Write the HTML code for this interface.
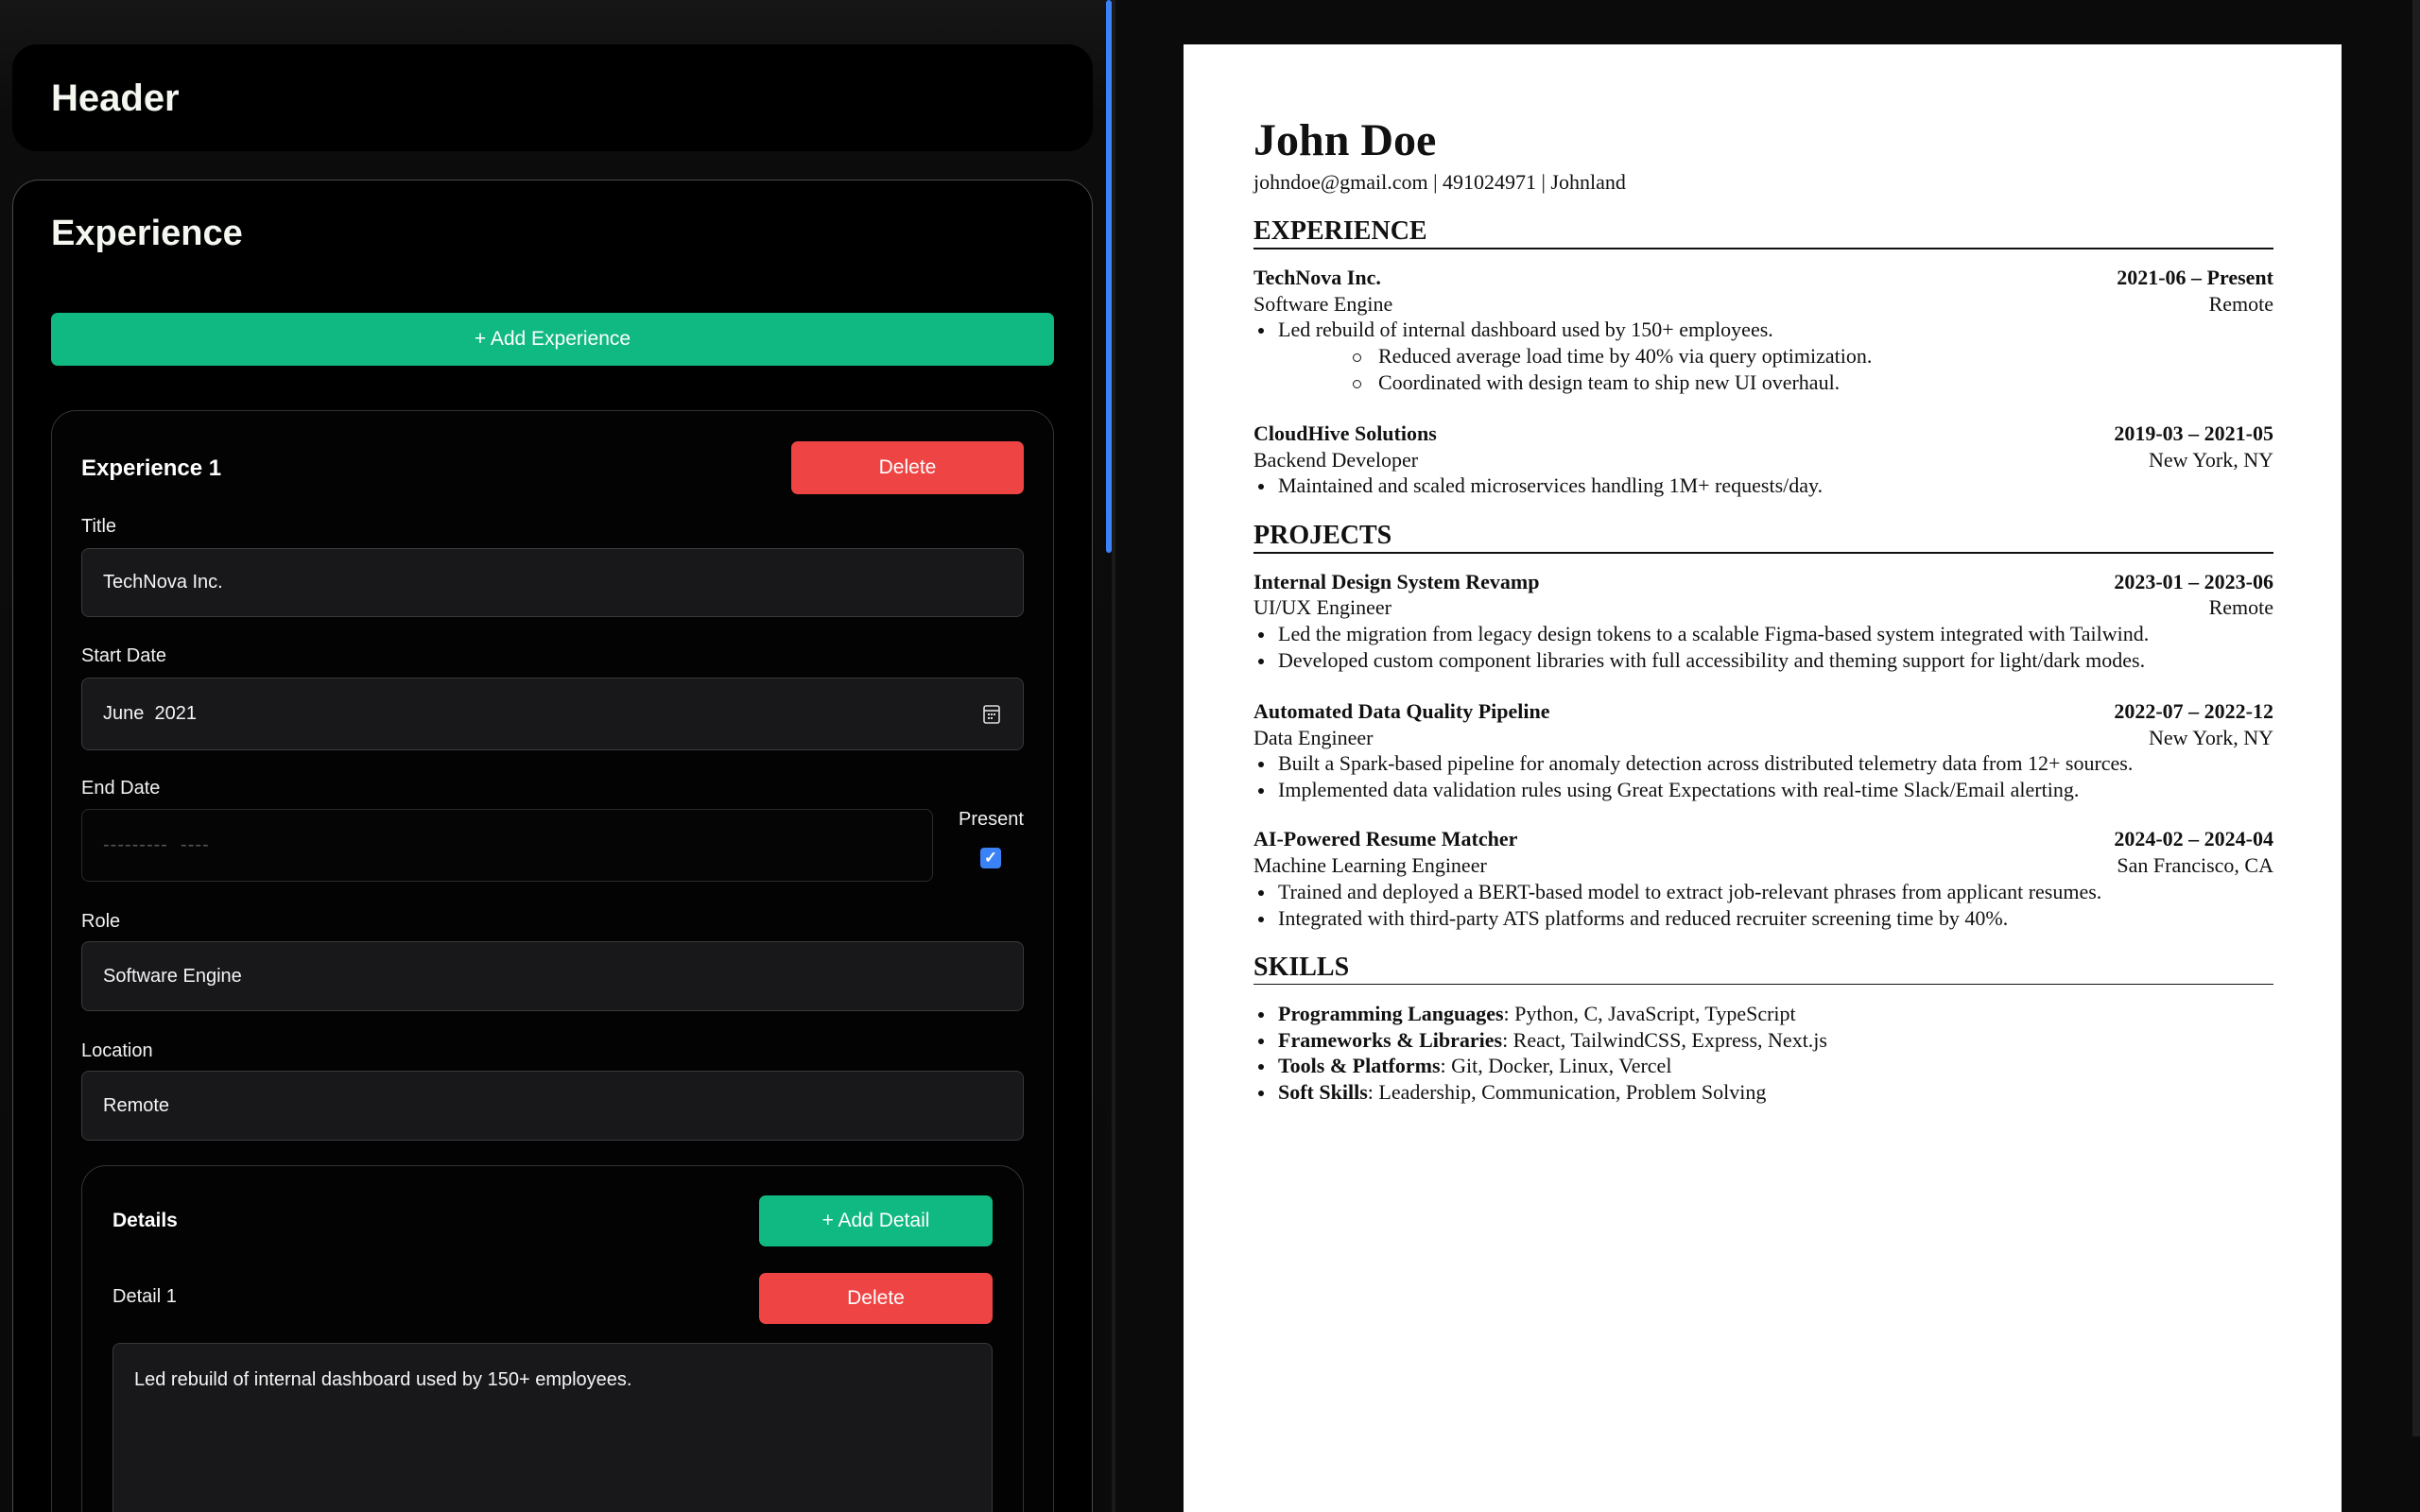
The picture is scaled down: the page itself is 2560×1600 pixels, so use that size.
<!DOCTYPE html>
<html><head><meta charset="utf-8">
<style>
*{box-sizing:border-box;margin:0;padding:0}
html,body{width:2560px;height:1600px;overflow:hidden}
body{background:#0b0b0b;font-family:"Liberation Sans",sans-serif}
#wrap{position:relative;width:2560px;height:1600px;overflow:hidden}
.a{position:absolute}
#left{position:absolute;left:0;top:0;width:1170px;height:1600px;overflow:hidden;background:linear-gradient(#161616,#0c0c0c 120px,#0a0a0a)}
.card{position:absolute;background:#000;border-radius:26px}
.open{border-bottom:none !important;border-bottom-left-radius:0 !important;border-bottom-right-radius:0 !important}
.lbl{position:absolute;color:#f1f1f1;font-size:20px;line-height:24px}
.inp{position:absolute;left:86px;width:997px;background:#18181b;border:1px solid #3a3a3e;border-radius:8px;color:#f4f4f4;font-size:20px;padding-left:22px;display:flex;align-items:center}
.btn{position:absolute;border-radius:7px;color:#fff;font-size:21px;display:flex;align-items:center;justify-content:center}
.g{background:#10b981}.r{background:#ef4444}
#page{position:absolute;left:1252px;top:47px;width:1225px;height:1553px;background:#fff}
.l{position:absolute;left:1326px;width:1079px;height:28px;line-height:28px;font-family:"Liberation Serif",serif;font-size:22px;color:#111;display:flex;justify-content:space-between;white-space:nowrap}
.b{font-weight:bold}
.h{font-size:28px;font-weight:bold;height:34px;line-height:34px}
.rule{position:absolute;left:1326px;width:1079px;height:2px;background:#111}
.bl::before{content:"";position:absolute;left:5px;top:12px;width:6px;height:6px;border-radius:50%;background:#111}
.bl{padding-left:26px;justify-content:flex-start}
.sb{padding-left:132px;justify-content:flex-start}
.sb::before{content:"";position:absolute;left:105px;top:11px;width:7px;height:7px;border-radius:50%;border:1px solid #111}
</style></head><body><div id="wrap">
<div id="left">
  <div class="card" style="left:13px;top:47px;width:1143px;height:113px;background:#000"></div>
  <div class="a" style="left:54px;top:82px;color:#f3f7f0;font-size:40px;font-weight:bold">Header</div>

  <div class="card open" style="left:13px;top:190px;width:1143px;height:1410px;border:1px solid #4a4a4a;border-radius:28px"></div>
  <div class="a" style="left:54px;top:226px;color:#f3f7f0;font-size:38px;font-weight:bold">Experience</div>
  <div class="btn g" style="left:54px;top:331px;width:1061px;height:56px">+ Add Experience</div>

  <div class="card open" style="left:54px;top:434px;width:1061px;height:1166px;border:1px solid #333;border-radius:26px;background:#030303"></div>
  <div class="a" style="left:86px;top:482px;color:#fff;font-size:24px;font-weight:bold">Experience 1</div>
  <div class="btn r" style="left:837px;top:467px;width:246px;height:56px">Delete</div>

  <div class="lbl" style="left:86px;top:545px">Title</div>
  <div class="inp" style="top:580px;height:73px">TechNova Inc.</div>
  <div class="lbl" style="left:86px;top:682px">Start Date</div>
  <div class="inp" style="top:717px;height:77px">June&nbsp; 2021
    <svg class="a" style="left:952px;top:27px" width="20" height="22" viewBox="0 0 20 22"><rect x="2" y="2" width="16" height="18" rx="2" fill="none" stroke="#ddd" stroke-width="1.6"/><line x1="2" y1="7" x2="18" y2="7" stroke="#ddd" stroke-width="1.6"/><g fill="#ddd"><rect x="6" y="10" width="2" height="2"/><rect x="9" y="10" width="2" height="2"/><rect x="12" y="10" width="2" height="2"/><rect x="6" y="14" width="2" height="2"/><rect x="9" y="14" width="2" height="2"/></g></svg>
  </div>
  <div class="lbl" style="left:86px;top:822px">End Date</div>
  <div class="inp" style="top:856px;height:77px;width:901px;background:#050505;border-color:#2a2a2a;color:#555;letter-spacing:1px">---------&nbsp; ----</div>
  <div class="lbl" style="left:1014px;top:855px">Present</div>
  <div class="a" style="left:1037px;top:897px;width:22px;height:22px;border-radius:4px;background:#3b82f6;color:#fff;font-size:17px;line-height:22px;text-align:center;font-weight:bold">✓</div>
  <div class="lbl" style="left:86px;top:963px">Role</div>
  <div class="inp" style="top:996px;height:74px">Software Engine</div>
  <div class="lbl" style="left:86px;top:1100px">Location</div>
  <div class="inp" style="top:1133px;height:74px">Remote</div>

  <div class="card open" style="left:86px;top:1233px;width:997px;height:367px;border:1px solid #333;border-radius:26px;background:#030303"></div>
  <div class="a" style="left:119px;top:1280px;color:#fff;font-size:21px;font-weight:bold">Details</div>
  <div class="btn g" style="left:803px;top:1265px;width:247px;height:54px">+ Add Detail</div>
  <div class="lbl" style="left:119px;top:1360px">Detail 1</div>
  <div class="btn r" style="left:803px;top:1347px;width:247px;height:54px">Delete</div>
  <div class="a open" style="left:119px;top:1421px;width:931px;height:179px;background:#18181b;border:1px solid #3a3a3e;border-radius:8px;color:#f4f4f4;font-size:20px;padding:27px 22px">Led rebuild of internal dashboard used by 150+ employees.</div>
</div>
<div class="a" style="left:1170px;top:0;width:6px;height:585px;background:#3b82f6;border-radius:3px"></div>
<div class="a" style="left:1176px;top:0;width:4px;height:1600px;background:#1a1a1a"></div>
<div class="a" style="left:2552px;top:0;width:8px;height:1520px;background:#1e1e1e"></div>

<div id="page"></div>
<div class="l" style="top:120px;height:58px;line-height:58px;font-size:48px;font-weight:bold">John Doe</div>
<div class="l" style="top:179px">johndoe@gmail.com | 491024971 | Johnland</div>

<div class="l h" style="top:228px">EXPERIENCE</div>
<div class="rule" style="top:262px"></div>
<div class="l b" style="top:280px"><span>TechNova Inc.</span><span>2021-06 – Present</span></div>
<div class="l" style="top:308px"><span>Software Engine</span><span>Remote</span></div>
<div class="l bl" style="top:335px">Led rebuild of internal dashboard used by 150+ employees.</div>
<div class="l sb" style="top:363px">Reduced average load time by 40% via query optimization.</div>
<div class="l sb" style="top:391px">Coordinated with design team to ship new UI overhaul.</div>
<div class="l b" style="top:445px"><span>CloudHive Solutions</span><span>2019-03 – 2021-05</span></div>
<div class="l" style="top:473px"><span>Backend Developer</span><span>New York, NY</span></div>
<div class="l bl" style="top:500px">Maintained and scaled microservices handling 1M+ requests/day.</div>

<div class="l h" style="top:550px">PROJECTS</div>
<div class="rule" style="top:584px"></div>
<div class="l b" style="top:602px"><span>Internal Design System Revamp</span><span>2023-01 – 2023-06</span></div>
<div class="l" style="top:629px"><span>UI/UX Engineer</span><span>Remote</span></div>
<div class="l bl" style="top:657px">Led the migration from legacy design tokens to a scalable Figma-based system integrated with Tailwind.</div>
<div class="l bl" style="top:685px">Developed custom component libraries with full accessibility and theming support for light/dark modes.</div>
<div class="l b" style="top:739px"><span>Automated Data Quality Pipeline</span><span>2022-07 – 2022-12</span></div>
<div class="l" style="top:767px"><span>Data Engineer</span><span>New York, NY</span></div>
<div class="l bl" style="top:794px">Built a Spark-based pipeline for anomaly detection across distributed telemetry data from 12+ sources.</div>
<div class="l bl" style="top:822px">Implemented data validation rules using Great Expectations with real-time Slack/Email alerting.</div>
<div class="l b" style="top:874px"><span>AI-Powered Resume Matcher</span><span>2024-02 – 2024-04</span></div>
<div class="l" style="top:902px"><span>Machine Learning Engineer</span><span>San Francisco, CA</span></div>
<div class="l bl" style="top:930px">Trained and deployed a BERT-based model to extract job-relevant phrases from applicant resumes.</div>
<div class="l bl" style="top:958px">Integrated with third-party ATS platforms and reduced recruiter screening time by 40%.</div>

<div class="l h" style="top:1007px">SKILLS</div>
<div class="rule" style="top:1041px;height:1px"></div>
<div class="l bl" style="top:1059px"><b>Programming Languages</b>: Python, C, JavaScript, TypeScript</div>
<div class="l bl" style="top:1087px"><b>Frameworks &amp; Libraries</b>: React, TailwindCSS, Express, Next.js</div>
<div class="l bl" style="top:1114px"><b>Tools &amp; Platforms</b>: Git, Docker, Linux, Vercel</div>
<div class="l bl" style="top:1142px"><b>Soft Skills</b>: Leadership, Communication, Problem Solving</div>
</div></body></html>
